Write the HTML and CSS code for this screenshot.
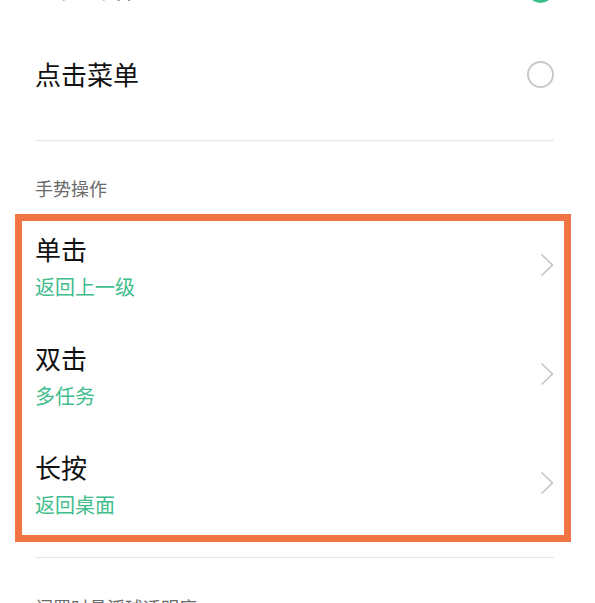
FILE: index.html
```html
<!DOCTYPE html>
<html lang="zh">
<head>
<meta charset="utf-8">
<link rel="stylesheet" href="styles.css">
</head>
<body>
<div class="page">
  <div class="radio-row first">
    <span class="radio-label">手势操作</span>
    <span class="radio on"></span>
  </div>
  <div class="radio-row">
    <span class="radio-label">点击菜单</span>
    <span class="radio"></span>
  </div>
  <div class="divider d1"></div>
  <div class="section-title">手势操作</div>
  <div class="group">
    <div class="highlight"></div>
    <div class="nav-row">
      <div class="texts">
        <div class="title">单击</div>
        <div class="sub">返回上一级</div>
      </div>
      <svg class="chev" viewBox="0 0 14 24" width="14" height="24"><path d="M1.5 1.5 L12.5 12 L1.5 22.5" fill="none" stroke="#c4c4c4" stroke-width="1.6"/></svg>
    </div>
    <div class="nav-row">
      <div class="texts">
        <div class="title">双击</div>
        <div class="sub">多任务</div>
      </div>
      <svg class="chev" viewBox="0 0 14 24" width="14" height="24"><path d="M1.5 1.5 L12.5 12 L1.5 22.5" fill="none" stroke="#c4c4c4" stroke-width="1.6"/></svg>
    </div>
    <div class="nav-row">
      <div class="texts">
        <div class="title">长按</div>
        <div class="sub">返回桌面</div>
      </div>
      <svg class="chev" viewBox="0 0 14 24" width="14" height="24"><path d="M1.5 1.5 L12.5 12 L1.5 22.5" fill="none" stroke="#c4c4c4" stroke-width="1.6"/></svg>
    </div>
  </div>
  <div class="divider d2"></div>
  <div class="section-title s2">闲置时悬浮球透明度</div>
</div>
</body>
</html>
```
FILE: styles.css
```css
html, body {
  margin: 0;
  padding: 0;
  background: #ffffff;
  overflow: hidden;
}
body {
  font-family: "Noto Sans CJK SC", "Noto Sans", sans-serif;
  color: #111111;
}
.page {
  width: 595px;
  height: 603px;
  padding: 0 41px 0 35px;
  box-sizing: border-box;
  overflow: hidden;
}
.radio-row {
  height: 86px;
  display: flex;
  align-items: center;
  justify-content: space-between;
}
.radio-row.first {
  height: 89px;
  margin-top: -58px;
}
.radio-label {
  font-size: 26px;
  line-height: 32px;
  color: #111111;
}
.radio {
  width: 23px;
  height: 23px;
  border: 2px solid #c9c9c9;
  border-radius: 50%;
}
.radio.on {
  border-color: #3fbd8c;
  background: #3fbd8c;
  margin-top: 5px;
}
.divider {
  height: 1px;
  background: #e6e6e6;
}
.d1 {
  margin-top: 23px;
}
.d2 {
  margin-top: 9px;
}
.section-title {
  margin-top: 35px;
  font-size: 18px;
  line-height: 24px;
  color: #6a6a6a;
}
.s2 {
  margin-top: 37px;
}
.group {
  position: relative;
  margin-top: 21px;
}
.highlight {
  position: absolute;
  left: -20px;
  top: -7px;
  width: 556px;
  height: 328px;
  box-sizing: border-box;
  border: 7px solid #f07444;
  pointer-events: none;
}
.nav-row {
  height: 109px;
  box-sizing: border-box;
  padding: 12px 0 30px;
  display: flex;
  align-items: center;
  justify-content: space-between;
}
.texts {
  display: flex;
  flex-direction: column;
  gap: 9px;
}
.title {
  font-size: 26px;
  line-height: 32px;
  color: #111111;
}
.sub {
  font-size: 20px;
  line-height: 26px;
  color: #3fbd8c;
}
.chev {
  display: block;
  margin-top: -3px;
}
```
